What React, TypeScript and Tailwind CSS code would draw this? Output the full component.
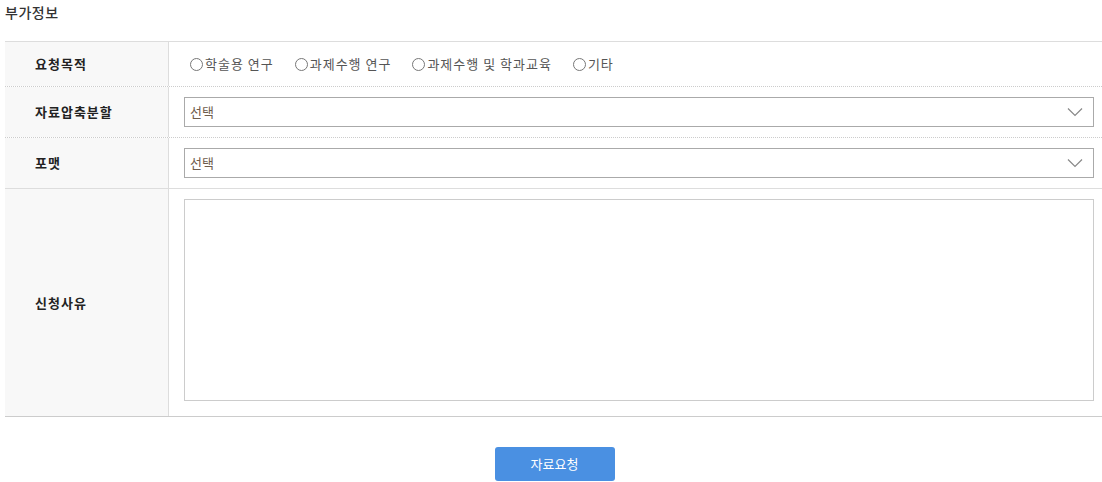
import React from 'react';

const font = { fontFamily: '"Noto Sans CJK KR", "Noto Sans", sans-serif' };

const purposes = ['학술용 연구', '과제수행 연구', '과제수행 및 학과교육', '기타'];

const Chevron: React.FC = () => (
  <svg width="16" height="10" viewBox="0 0 16 10" fill="none" className="shrink-0">
    <path d="M1 1.5 L8 8.5 L15 1.5" stroke="#888" strokeWidth="1.2" />
  </svg>
);

const Label: React.FC<{ children: React.ReactNode }> = ({ children }) => (
  <div className="flex items-center bg-[#f8f8f8] border-r border-[#dddddd] pl-[30px] text-[13px] font-bold tracking-[1px] text-[#222]">
    {children}
  </div>
);

const SelectBox: React.FC = () => (
  <div className="flex h-[30px] items-center justify-between border border-[#aaaaaa] pl-[5px] pr-[10px] text-[13px] text-[#6e5c4c]">
    <span>선택</span>
    <Chevron />
  </div>
);

export default function App() {
  return (
    <div className="w-full bg-white text-[#333]" style={font}>
      <h3 className="h-[41px] pl-[5px] pt-[2px] text-[14px] font-medium tracking-[0.5px] text-[#333]">부가정보</h3>

      <div className="ml-[5px] border-t border-[#dddddd] border-b border-b-[#cccccc]">
        <div className="grid grid-cols-[164px_1fr] h-[45px] border-b border-dotted border-[#cccccc]">
          <Label>요청목적</Label>
          <div className="flex items-center gap-[21px] pl-[21px] text-[13px] tracking-[1px] text-[#555]">
            {purposes.map((p) => (
              <label key={p} className="flex items-center gap-[2px]">
                <span className="h-[13px] w-[13px] rounded-full border border-[#777] bg-white" />
                <span>{p}</span>
              </label>
            ))}
          </div>
        </div>

        <div className="grid grid-cols-[164px_1fr] h-[51px] border-b border-dotted border-[#cccccc]">
          <Label>자료압축분할</Label>
          <div className="py-[10px] pl-[15px] pr-[8px]">
            <SelectBox />
          </div>
        </div>

        <div className="grid grid-cols-[164px_1fr] h-[51px] border-b border-[#dddddd]">
          <Label>포맷</Label>
          <div className="py-[10px] pl-[15px] pr-[8px]">
            <SelectBox />
          </div>
        </div>

        <div className="grid grid-cols-[164px_1fr] h-[227px]">
          <Label>신청사유</Label>
          <div className="pt-[10px] pb-[15px] pl-[15px] pr-[8px]">
            <textarea className="block h-[202px] w-full resize-none border border-[#cccccc] outline-none" />
          </div>
        </div>
      </div>

      <div className="flex justify-center pl-[7px] pt-[30px]">
        <button className="h-[34px] w-[120px] rounded-[3px] bg-[#4a90e2] text-[13px] text-white">
          자료요청
        </button>
      </div>
    </div>
  );
}
